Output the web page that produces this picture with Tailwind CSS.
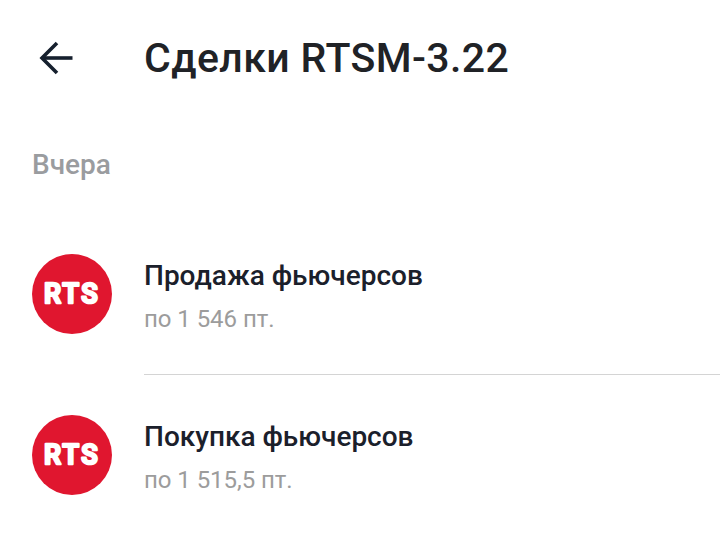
<!DOCTYPE html>
<html lang="ru">
<head>
<meta charset="utf-8">
<script src="https://cdn.jsdelivr.net/npm/@tailwindcss/browser@4"></script>
</head>
<body class="bg-white font-[Roboto,sans-serif] w-[720px] h-[533px] overflow-hidden">
  <header class="flex items-center h-[116px] pl-[32px]">
    <svg class="w-[48px] h-[48px] ml-[1px] mr-[63px]" viewBox="0 0 48 48" fill="none" stroke="#16202e" stroke-width="3.6"><path d="M39.5 24H9"/><path d="M24 9 9 24l15 15"/></svg>
    <h1 class="text-[41px] leading-[48px] font-medium tracking-[0.4px] text-[#202226]">Сделки RTSM-3.22</h1>
  </header>
  <div class="pl-[32px] h-[26px] mt-[36px] text-[28px] leading-[26px] font-medium text-[#9a9c9f]">Вчера</div>
  <ul class="mt-[36px]">
    <li class="flex h-[161px] pl-[32px]">
      <div class="shrink-0 w-[80px] h-[80px] mt-[40px] rounded-full bg-[#e0162f]">
        <svg class="w-[80px] h-[80px]" viewBox="0 0 80 80"><text x="40" y="49" text-anchor="middle" font-family="Roboto" font-weight="500" font-size="27" letter-spacing="2.5" fill="#fff" stroke="#fff" stroke-width="2.6" stroke-linejoin="round">RTS</text></svg>
      </div>
      <div class="flex-1 ml-[32px] border-b border-[#d4d4d4] pt-[38px]">
        <div class="text-[28px] leading-[48px] font-medium text-[#1b202b]">Продажа фьючерсов</div>
        <div class="text-[24px] leading-[38px] tracking-[-0.05px] text-[#9c9c9c]">по 1 546 пт.</div>
      </div>
    </li>
    <li class="flex h-[161px] pl-[32px]">
      <div class="shrink-0 w-[80px] h-[80px] mt-[40px] rounded-full bg-[#e0162f]">
        <svg class="w-[80px] h-[80px]" viewBox="0 0 80 80"><text x="40" y="49" text-anchor="middle" font-family="Roboto" font-weight="500" font-size="27" letter-spacing="2.5" fill="#fff" stroke="#fff" stroke-width="2.6" stroke-linejoin="round">RTS</text></svg>
      </div>
      <div class="flex-1 ml-[32px] pt-[38px]">
        <div class="text-[28px] leading-[48px] font-medium text-[#1b202b]">Покупка фьючерсов</div>
        <div class="text-[24px] leading-[38px] tracking-[-0.05px] text-[#9c9c9c]">по 1 515,5 пт.</div>
      </div>
    </li>
  </ul>
</body>
</html>
